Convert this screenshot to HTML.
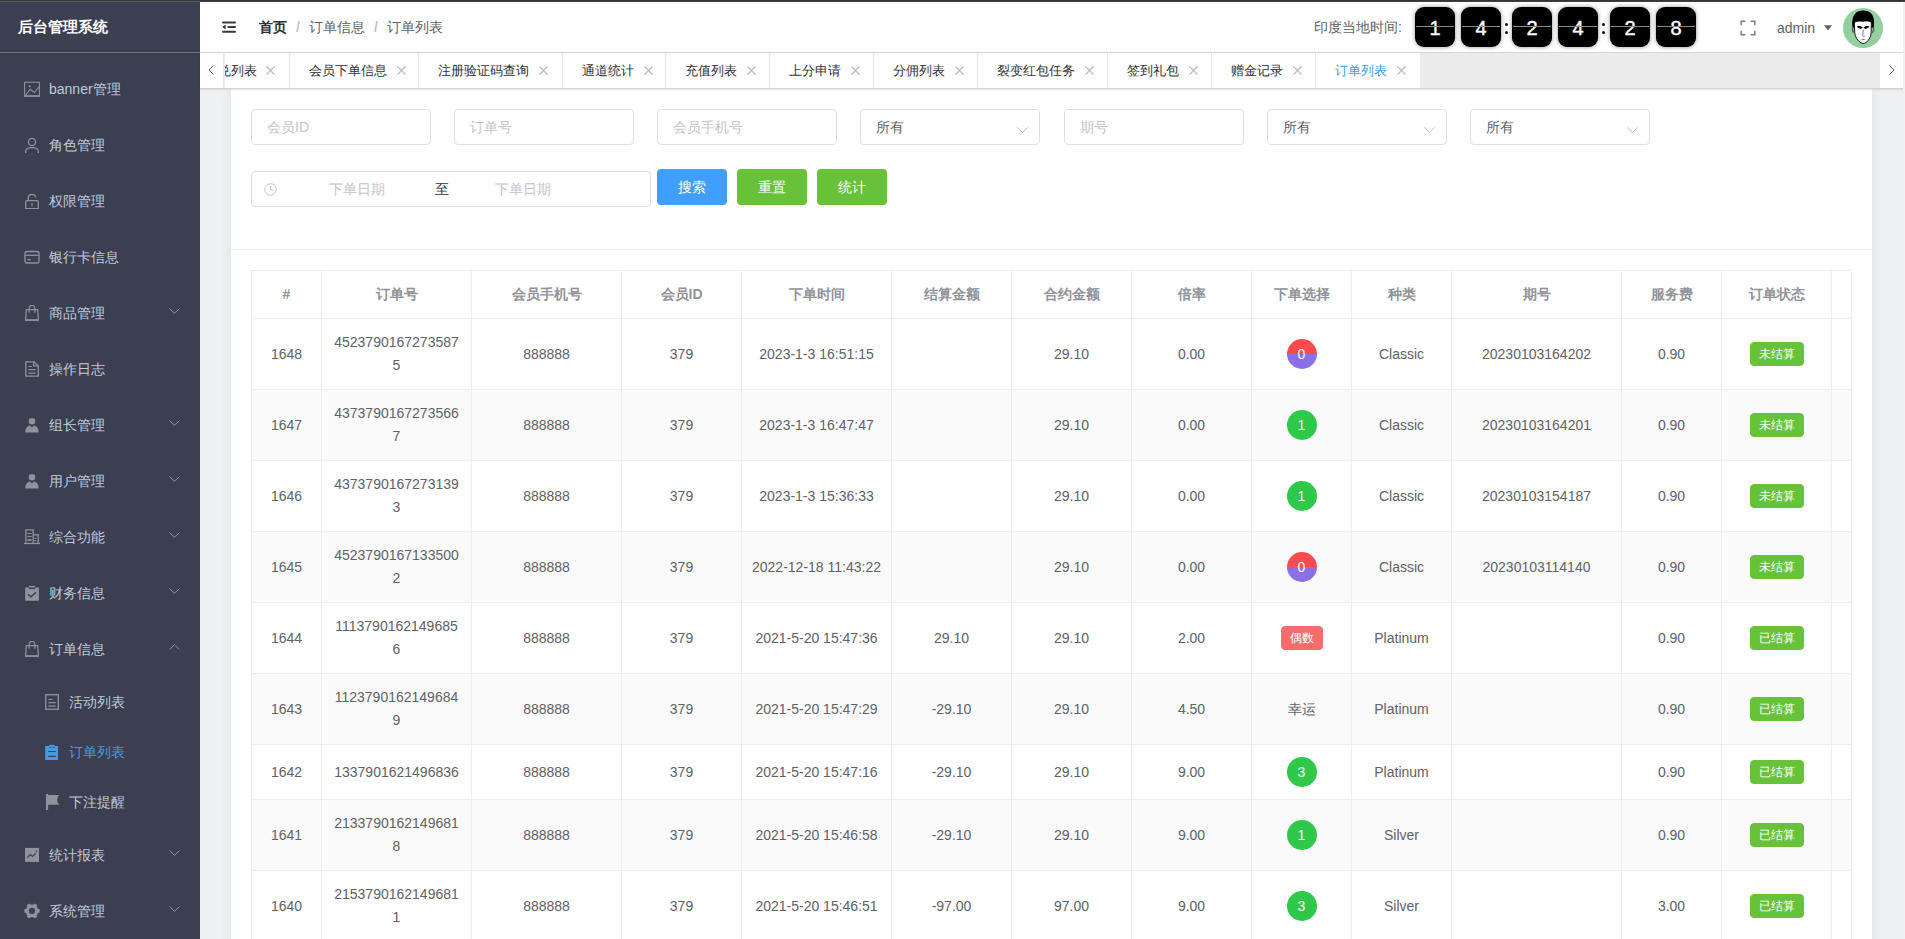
<!DOCTYPE html>
<html><head><meta charset="utf-8">
<style>
*{box-sizing:border-box;margin:0;padding:0}
html,body{width:1905px;height:939px;overflow:hidden;background:#eef1f2;font-family:"Liberation Sans",sans-serif;font-size:14px;color:#606266}
.abs{position:absolute}
#topbar{position:absolute;left:0;top:0;width:1905px;height:2px;background:#343539;z-index:6}
#side{position:absolute;left:0;top:2px;width:200px;height:937px;background:#3b3f51}
#logo{position:absolute;left:0;top:0;width:200px;height:51px;border-bottom:1px solid #6f717c}
#logo span{position:absolute;left:18px;top:15px;font-size:15px;font-weight:bold;color:#fff;line-height:20px;white-space:nowrap}
.mi{position:absolute;left:0;width:200px;height:56px;color:#bfcbd9;font-size:14px}
.mi .ic{position:absolute;left:24px;top:21px;width:16px;height:16px}
.mi .tx{position:absolute;left:49px;top:19px;line-height:20px;white-space:nowrap}
.mi .ch{position:absolute;left:169px;top:24px;width:11px;height:6px}
.si{position:absolute;left:0;width:200px;height:50px;color:#bfcbd9}
.si .ic{position:absolute;left:45px;top:18px;width:16px;height:16px}
.si .tx{position:absolute;left:69px;top:16px;line-height:20px;white-space:nowrap}
#hdr{position:absolute;left:200px;top:2px;width:1705px;height:51px;background:#fff;border-bottom:1px solid #d4d4d4;z-index:3}
#tabs{position:absolute;left:200px;top:53px;width:1703px;height:36px;background:#ebebeb;border-bottom:1px solid #d2d2d2;box-shadow:0 1px 2px 0 rgba(0,0,0,.10);z-index:2}
.tab{position:absolute;top:0;height:35px;background:#fff;border-right:1px solid #e6e6e6;font-size:13px;color:#303133;line-height:35px;white-space:nowrap}
.tab .t{position:absolute;left:19px;top:0}
.tab .x{position:absolute;top:13px;width:9px;height:9px}
#rstrip{position:absolute;left:1903px;top:2px;width:2px;height:937px;background:#f1f1f1;z-index:5}
#card{position:absolute;left:231px;top:89px;width:1641px;height:860px;background:#fff;box-shadow:0 0 12px rgba(0,0,0,.07)}
.inp{position:absolute;height:36px;border:1px solid #dcdfe6;border-radius:4px;background:#fff;font-size:14px;color:#c0c4cc;line-height:34px;white-space:nowrap}
.inp .p{position:absolute;left:15px;top:0}
.inp.sel .p{color:#606266;left:15px}
.inp .arr{position:absolute;right:11px;top:17px;width:11px;height:6px}
.btn{position:absolute;top:169px;height:36px;width:70px;border-radius:4px;color:#fff;font-size:14px;line-height:36px;text-align:center}
#tbl{position:absolute;left:251px;top:270px;border-collapse:collapse;table-layout:fixed;width:1601px}
#tbl td,#tbl th{border:1px solid #ebeef5;text-align:center;padding:0 10px;line-height:23px;word-break:break-all;font-size:14px;font-weight:normal;color:#606266}
#tbl th{color:#909399;font-weight:bold;height:48px}
#tbl tr.s td{background:#fafafa}
.cir{display:inline-block;width:30px;height:30px;border-radius:50%;color:#fff;line-height:30px;vertical-align:middle;font-size:14px}
.g{background:#2ec84a}
.rp{background:linear-gradient(#ff4b50 50%,#8a6fe8 50%)}
.tag{display:inline-block;height:24px;line-height:22px;padding:0 8px;border-radius:4px;font-size:12px;color:#fff;vertical-align:middle}
.tg{background:#67c23a;border:1px solid #67c23a}
.tr{background:#f56c6c;border:1px solid #f56c6c}


.bc .sep{color:#c0c4cc;margin:0 9px;font-weight:bold}
.dg{position:absolute;top:5px;width:40px;height:40px;background:#000;border-radius:9px;box-shadow:0 0 4px rgba(0,0,0,.45);color:#fff;font-size:20px;text-align:center;line-height:42px;-webkit-text-stroke:0.4px #fff}
.dg i{position:absolute;left:1px;right:1px;top:19px;height:1px;background:#8a8a8a}
.dot{position:absolute;width:3px;height:3px;border-radius:50%;background:#111}
</style></head><body>
<div id="side"><div id="logo"><span>后台管理系统</span></div></div>
<div class="mi" style="top:60px"><svg class="ic" viewBox="0 0 16 16"><rect x="0.6" y="1.25" width="14.8" height="14" stroke="#909399" fill="none" stroke-width="1.05"/><rect x="0.6" y="14.2" width="14.8" height="1.5" fill="#909399"/><path d="M1.6 14.2 L6.3 8.25 L10.3 11.5 L15 5.9" stroke="#909399" fill="none" stroke-width="1.05"/><circle cx="5.6" cy="5.2" r="1.05" fill="#909399"/></svg><span class="tx">banner管理</span></div>
<div class="mi" style="top:116px"><svg class="ic" viewBox="0 0 16 16"><circle cx="8" cy="5" r="3.6" stroke="#909399" fill="none" stroke-width="1.3"/><path d="M1.7 16 V14.5 C1.7 11.8 4 10.6 8 10.6 C12 10.6 14.3 11.8 14.3 14.5 V16" stroke="#909399" fill="none" stroke-width="1.3"/></svg><span class="tx">角色管理</span></div>
<div class="mi" style="top:172px"><svg class="ic" viewBox="0 0 16 16"><rect x="1.7" y="7.7" width="12.6" height="8" rx="1" stroke="#909399" fill="none" stroke-width="1.3"/><path d="M4.3 7.7 V5 C4.3 2.8 6 1.3 8 1.3 C10 1.3 11.5 2.6 11.7 4.3" stroke="#909399" fill="none" stroke-width="1.3"/><path d="M8 10.3 V13" stroke="#909399" fill="none" stroke-width="1.3" stroke-width="1.5"/></svg><span class="tx">权限管理</span></div>
<div class="mi" style="top:228px"><svg class="ic" viewBox="0 0 16 16"><rect x="1" y="2.5" width="14" height="11.5" rx="1.5" stroke="#909399" fill="none" stroke-width="1.3"/><path d="M1 6.3 H15" stroke="#909399" fill="none" stroke-width="1.3"/><path d="M3.2 10.7 H7" stroke="#909399" fill="none" stroke-width="1.3" stroke-width="1.5"/></svg><span class="tx">银行卡信息</span></div>
<div class="mi" style="top:284px"><svg class="ic" viewBox="0 0 16 16"><path d="M2.3 4.7 H13.7 L14.4 15.2 H1.6 Z" stroke="#909399" fill="none" stroke-width="1.2"/><rect x="1.4" y="14.3" width="13.2" height="1.5" fill="#909399"/><path d="M5.2 7.8 V3.3 C5.2 1.6 6.4 0.5 8 0.5 C9.6 0.5 10.8 1.6 10.8 3.3 V7.8" stroke="#909399" fill="none" stroke-width="1.2"/></svg><span class="tx">商品管理</span><svg class="ch" viewBox="0 0 11 6"><path d="M0.5 0.5 L5.5 5.3 L10.5 0.5" stroke="#909399" fill="none" stroke-width="1"/></svg></div>
<div class="mi" style="top:340px"><svg class="ic" viewBox="0 0 16 16"><path d="M1.8 0.8 H10 L14.3 5 V15.1 H1.8 Z" stroke="#909399" fill="none" stroke-width="1.3"/><path d="M9.6 0.8 V4.8 H14.3" stroke="#909399" fill="none" stroke-width="1.2"/><path d="M4.4 5.5 H7.8 M4.4 8.7 H11.6 M4.4 12.1 H11.6" stroke="#909399" fill="none" stroke-width="1.2"/></svg><span class="tx">操作日志</span></div>
<div class="mi" style="top:396px"><svg class="ic" viewBox="0 0 16 16"><circle cx="8" cy="4.2" r="3.3" fill="#909399"/><path d="M1.3 15.5 C1.3 11 3.5 9 6 8.5 L8 10.5 L10 8.5 C12.5 9 14.7 11 14.7 15.5 Z" fill="#909399"/></svg><span class="tx">组长管理</span><svg class="ch" viewBox="0 0 11 6"><path d="M0.5 0.5 L5.5 5.3 L10.5 0.5" stroke="#909399" fill="none" stroke-width="1"/></svg></div>
<div class="mi" style="top:452px"><svg class="ic" viewBox="0 0 16 16"><circle cx="8" cy="4.2" r="3.3" fill="#909399"/><path d="M1.3 15.5 C1.3 11 3.5 9 6 8.5 L8 10.5 L10 8.5 C12.5 9 14.7 11 14.7 15.5 Z" fill="#909399"/></svg><span class="tx">用户管理</span><svg class="ch" viewBox="0 0 11 6"><path d="M0.5 0.5 L5.5 5.3 L10.5 0.5" stroke="#909399" fill="none" stroke-width="1"/></svg></div>
<div class="mi" style="top:508px"><svg class="ic" viewBox="0 0 16 16"><path d="M1.9 14.5 V0.9 H9.2 V14.5" stroke="#909399" fill="none" stroke-width="1.3"/><path d="M9.2 5.8 H14.3 V14.5" stroke="#909399" fill="none" stroke-width="1.3"/><path d="M0 14.5 H16" stroke="#909399" fill="none" stroke-width="1.3"/><path d="M3.4 4.5 H7.6 M3.4 7.5 H7.6" stroke="#909399" fill="none" stroke-width="1.1"/><path d="M3.4 11 H7.6" stroke="#909399" fill="none" stroke-width="1.7"/><path d="M10.3 9.4 H12.4 M10.3 11.6 H12.4" stroke="#909399" fill="none" stroke-width="1"/></svg><span class="tx">综合功能</span><svg class="ch" viewBox="0 0 11 6"><path d="M0.5 0.5 L5.5 5.3 L10.5 0.5" stroke="#909399" fill="none" stroke-width="1"/></svg></div>
<div class="mi" style="top:564px"><svg class="ic" viewBox="0 0 16 16"><path d="M1.2 2.4 H5 V4 H11.1 V2.4 H14.9 V15.8 H1.2 Z" fill="#909399"/><rect x="5" y="0.9" width="6.1" height="1.6" fill="#909399"/><path d="M4 9.3 L7 11.8 L11.9 7.3" stroke="#3b3f51" fill="none" stroke-width="1.4"/></svg><span class="tx">财务信息</span><svg class="ch" viewBox="0 0 11 6"><path d="M0.5 0.5 L5.5 5.3 L10.5 0.5" stroke="#909399" fill="none" stroke-width="1"/></svg></div>
<div class="mi" style="top:620px"><svg class="ic" viewBox="0 0 16 16"><path d="M2.3 4.7 H13.7 L14.4 15.2 H1.6 Z" stroke="#909399" fill="none" stroke-width="1.2"/><rect x="1.4" y="14.3" width="13.2" height="1.5" fill="#909399"/><path d="M5.2 7.8 V3.3 C5.2 1.6 6.4 0.5 8 0.5 C9.6 0.5 10.8 1.6 10.8 3.3 V7.8" stroke="#909399" fill="none" stroke-width="1.2"/></svg><span class="tx">订单信息</span><svg class="ch" viewBox="0 0 11 6"><path d="M0.5 5.5 L5.5 0.7 L10.5 5.5" stroke="#909399" fill="none" stroke-width="1"/></svg></div>
<div class="mi" style="top:826px"><svg class="ic" viewBox="0 0 16 16"><rect x="1" y="0.9" width="14" height="14" fill="#909399"/><path d="M3.3 10.6 L6.2 7.5 L8.5 9.4 L11.6 6.3" stroke="#3b3f51" fill="none" stroke-width="1.2"/><circle cx="12.6" cy="4.4" r="0.8" fill="#3b3f51"/></svg><span class="tx">统计报表</span><svg class="ch" viewBox="0 0 11 6"><path d="M0.5 0.5 L5.5 5.3 L10.5 0.5" stroke="#909399" fill="none" stroke-width="1"/></svg></div>
<div class="mi" style="top:882px"><svg class="ic" viewBox="0 0 16 16"><path fill-rule="evenodd" d="M14.01 6.00 L15.73 6.28 L15.73 9.52 L14.01 9.80 L13.67 10.65 L13.21 11.44 L12.65 12.15 L13.27 13.79 L10.46 15.41 L9.36 14.05 L8.46 14.18 L7.54 14.18 L6.64 14.05 L5.54 15.41 L2.73 13.79 L3.35 12.15 L2.79 11.44 L2.33 10.65 L1.99 9.80 L0.27 9.52 L0.27 6.28 L1.99 6.00 L2.33 5.15 L2.79 4.36 L3.35 3.65 L2.73 2.01 L5.54 0.39 L6.64 1.75 L7.54 1.62 L8.46 1.62 L9.36 1.75 L10.46 0.39 L13.27 2.01 L12.65 3.65 L13.21 4.36 L13.67 5.15 Z M11.1 7.9 A3.1 3.1 0 1 0 4.9 7.9 A3.1 3.1 0 1 0 11.1 7.9 Z" fill="#909399"/></svg><span class="tx">系统管理</span><svg class="ch" viewBox="0 0 11 6"><path d="M0.5 0.5 L5.5 5.3 L10.5 0.5" stroke="#909399" fill="none" stroke-width="1"/></svg></div>
<div class="si" style="top:676px"><svg class="ic" viewBox="0 0 16 16"><rect x="0.75" y="0.75" width="12.6" height="14.5" stroke="#909399" fill="none" stroke-width="1.3"/><path d="M3.4 5.5 H7.5 M3.4 8.7 H10.7 M3.4 12.2 H10.7" stroke="#909399" fill="none" stroke-width="1.2"/></svg><span class="tx">活动列表</span></div>
<div class="si" style="top:726px"><svg class="ic" viewBox="0 0 16 16"><path d="M0.2 2.1 H4 V3.7 H9.8 V2.1 H13 V16 H0.2 Z" fill="#4a98df"/><rect x="4.2" y="0.9" width="5.4" height="2.5" fill="#4a98df"/><path d="M3.2 7.5 H10.7 M3.2 12.4 H10.7" stroke="#3b3f51" stroke-width="1.1"/></svg><span class="tx" style="color:#4a9ae2">订单列表</span></div>
<div class="si" style="top:776px"><svg class="ic" viewBox="0 0 16 16"><rect x="1" y="0" width="2.1" height="16" fill="#909399"/><path d="M3 0.9 H14.05 Q10.2 5.85 14.05 10.8 H3 Z" fill="#909399"/></svg><span class="tx">下注提醒</span></div>

<div id="hdr">
 <svg class="abs" style="left:22px;top:17px" width="14" height="14" viewBox="0 0 14 14"><g stroke="#38393d" stroke-width="2" stroke-linecap="round"><path d="M1 3.5 H13"/><path d="M6.3 8 H13"/><path d="M1 12.7 H13"/></g><path d="M0.2 8 L3.6 5.6 V10.4 Z" fill="#38393d"/></svg>
 <div class="abs bc" style="left:59px;top:15px;line-height:20px;white-space:nowrap"><b style="color:#303133">首页</b><span class="sep">/</span><span>订单信息</span><span class="sep">/</span><span>订单列表</span></div>
 <div class="abs" style="left:1114px;top:15px;line-height:20px;color:#606266;white-space:nowrap">印度当地时间:</div>
 <div class="dg" style="left:1215px"><span>1</span><i></i></div><div class="dg" style="left:1261px"><span>4</span><i></i></div><div class="dg" style="left:1312px"><span>2</span><i></i></div><div class="dg" style="left:1358px"><span>4</span><i></i></div><div class="dg" style="left:1410px"><span>2</span><i></i></div><div class="dg" style="left:1456px"><span>8</span><i></i></div><div class="dot" style="left:1305px;top:21px"></div><div class="dot" style="left:1305px;top:29px"></div><div class="dot" style="left:1402px;top:21px"></div><div class="dot" style="left:1402px;top:29px"></div>
 <svg class="abs" style="left:1540px;top:18px" width="16" height="16" viewBox="0 0 16 16"><path d="M1.2 5.3 V1.2 H5.3 M10.7 1.2 H14.8 V5.3 M14.8 10.7 V14.8 H10.7 M5.3 14.8 H1.2 V10.7" stroke="#7a7c80" stroke-width="1.5" fill="none"/></svg>
 <div class="abs" style="left:1577px;top:16px;line-height:20px;color:#606266">admin</div>
 <svg class="abs" style="left:1624px;top:23px" width="8" height="6" viewBox="0 0 8 6"><path d="M0 0.3 H8 L4 5.5 Z" fill="#606266"/></svg>
 <svg class="abs" style="left:1643px;top:6px" width="40" height="40" viewBox="0 0 40 40"><circle cx="20" cy="20" r="20" fill="#93cf9f"/>
<path d="M9.5 19.5 C8.5 12 10 6 15 3.6 C18 2.2 22 2.2 25.5 3.6 C30.5 6 32 12 30.8 19.5 L28.6 20 L28.3 14.2 C26 12.8 23 12.6 20 13.3 C16.5 12.8 13.7 13.2 11.7 14.5 L11.5 20 Z" fill="#000"/>
<path d="M11.4 14.5 C13.5 13 16.5 12.8 20 13.3 C23 12.6 26 12.8 28.3 14.2 L28.2 24 C28 29 25.5 33.5 21.5 35.3 L19 35.3 C15 33.5 12 29 11.7 24 Z" fill="#fff" stroke="#000" stroke-width="0.9"/>
<path d="M9.8 19.5 C9.2 21.5 10 24 11.8 25 M30.4 19.5 C31 21.5 30.2 24 28.4 25" stroke="#555" stroke-width="1.4" fill="none"/>
<path d="M13.8 18.6 C16 17.6 18.3 18.2 19.8 19.8 C18 21.4 15.8 21 13.8 18.6 Z M26.4 18.6 C24.2 17.6 21.9 18.2 20.6 19.8 C22.2 21.4 24.4 21 26.4 18.6 Z" fill="#000"/>
<path d="M20.3 21.5 L19.6 27.5 C20 28.5 21 28.6 22 27.8" stroke="#222" stroke-width="0.6" fill="none"/>
<path d="M18 31.5 C19.5 30.8 21 30.8 22.6 31.5 C21 32.6 19.5 32.6 18 31.5 Z" fill="#777"/></svg>
</div>
<div id="tabs"><div class="tab" style="left:0;width:24px"><svg class="abs" style="left:8px;top:12px" width="6" height="10" viewBox="0 0 6 10"><path d="M5.5 0.5 L1 5 L5.5 9.5" stroke="#606266" fill="none" stroke-width="1"/></svg></div><div class="tab" style="left:25px;width:65px;overflow:hidden"><span class="t" style="left:-7px">兑列表</span><svg class="x" style="left:41px" viewBox="0 0 9 9"><path d="M0.5 0.5 L8.5 8.5 M8.5 0.5 L0.5 8.5" stroke="#b8bcc4" stroke-width="1.15"/></svg></div><div class="tab" style="left:90px;width:129px"><span class="t">会员下单信息</span><svg class="x" style="left:107px" viewBox="0 0 9 9"><path d="M0.5 0.5 L8.5 8.5 M8.5 0.5 L0.5 8.5" stroke="#b8bcc4" stroke-width="1.15"/></svg></div><div class="tab" style="left:219px;width:144px"><span class="t">注册验证码查询</span><svg class="x" style="left:120px" viewBox="0 0 9 9"><path d="M0.5 0.5 L8.5 8.5 M8.5 0.5 L0.5 8.5" stroke="#b8bcc4" stroke-width="1.15"/></svg></div><div class="tab" style="left:363px;width:103px"><span class="t">通道统计</span><svg class="x" style="left:81px" viewBox="0 0 9 9"><path d="M0.5 0.5 L8.5 8.5 M8.5 0.5 L0.5 8.5" stroke="#b8bcc4" stroke-width="1.15"/></svg></div><div class="tab" style="left:466px;width:104px"><span class="t">充值列表</span><svg class="x" style="left:81px" viewBox="0 0 9 9"><path d="M0.5 0.5 L8.5 8.5 M8.5 0.5 L0.5 8.5" stroke="#b8bcc4" stroke-width="1.15"/></svg></div><div class="tab" style="left:570px;width:104px"><span class="t">上分申请</span><svg class="x" style="left:81px" viewBox="0 0 9 9"><path d="M0.5 0.5 L8.5 8.5 M8.5 0.5 L0.5 8.5" stroke="#b8bcc4" stroke-width="1.15"/></svg></div><div class="tab" style="left:674px;width:104px"><span class="t">分佣列表</span><svg class="x" style="left:81px" viewBox="0 0 9 9"><path d="M0.5 0.5 L8.5 8.5 M8.5 0.5 L0.5 8.5" stroke="#b8bcc4" stroke-width="1.15"/></svg></div><div class="tab" style="left:778px;width:130px"><span class="t">裂变红包任务</span><svg class="x" style="left:107px" viewBox="0 0 9 9"><path d="M0.5 0.5 L8.5 8.5 M8.5 0.5 L0.5 8.5" stroke="#b8bcc4" stroke-width="1.15"/></svg></div><div class="tab" style="left:908px;width:104px"><span class="t">签到礼包</span><svg class="x" style="left:81px" viewBox="0 0 9 9"><path d="M0.5 0.5 L8.5 8.5 M8.5 0.5 L0.5 8.5" stroke="#b8bcc4" stroke-width="1.15"/></svg></div><div class="tab" style="left:1012px;width:104px"><span class="t">赠金记录</span><svg class="x" style="left:81px" viewBox="0 0 9 9"><path d="M0.5 0.5 L8.5 8.5 M8.5 0.5 L0.5 8.5" stroke="#b8bcc4" stroke-width="1.15"/></svg></div><div class="tab" style="left:1116px;width:104px;border-right:0"><span class="t" style="color:#409eff;left:19px">订单列表</span><svg class="x" style="left:81px" viewBox="0 0 9 9"><path d="M0.5 0.5 L8.5 8.5 M8.5 0.5 L0.5 8.5" stroke="#b8bcc4" stroke-width="1.15"/></svg></div><div class="tab" style="left:1680px;width:23px;border-right:0;border-left:0"><svg class="abs" style="left:9px;top:12px" width="6" height="10" viewBox="0 0 6 10"><path d="M0.5 0.5 L5 5 L0.5 9.5" stroke="#606266" fill="none" stroke-width="1"/></svg></div></div>
<div id="card"></div>
<div class="inp" style="left:251px;top:109px;width:180px"><span class="p">会员ID</span></div><div class="inp" style="left:454px;top:109px;width:180px"><span class="p">订单号</span></div><div class="inp" style="left:657px;top:109px;width:180px"><span class="p">会员手机号</span></div><div class="inp sel" style="left:860px;top:109px;width:180px"><span class="p">所有</span><svg class="arr" viewBox="0 0 11 6"><path d="M0.3 0.3 L5.5 5.5 L10.7 0.3" stroke="#c0c4cc" fill="none" stroke-width="1"/></svg></div><div class="inp" style="left:1064px;top:109px;width:180px"><span class="p">期号</span></div><div class="inp sel" style="left:1267px;top:109px;width:180px"><span class="p">所有</span><svg class="arr" viewBox="0 0 11 6"><path d="M0.3 0.3 L5.5 5.5 L10.7 0.3" stroke="#c0c4cc" fill="none" stroke-width="1"/></svg></div><div class="inp sel" style="left:1470px;top:109px;width:180px"><span class="p">所有</span><svg class="arr" viewBox="0 0 11 6"><path d="M0.3 0.3 L5.5 5.5 L10.7 0.3" stroke="#c0c4cc" fill="none" stroke-width="1"/></svg></div><div class="inp" style="left:251px;top:171px;width:400px"><svg class="abs" style="left:12px;top:11px" width="13" height="13" viewBox="0 0 13 13"><circle cx="6.5" cy="6.5" r="5.8" stroke="#c0c4cc" fill="none" stroke-width="1"/><path d="M6.5 3 V7 H9.5" stroke="#c0c4cc" fill="none" stroke-width="1"/></svg><span class="p" style="left:77px">下单日期</span><span class="p" style="left:183px;color:#303133">至</span><span class="p" style="left:243px">下单日期</span></div>
<div class="btn" style="left:657px;background:#409eff">搜索</div><div class="btn" style="left:737px;background:#67c23a">重置</div><div class="btn" style="left:817px;background:#67c23a">统计</div>
<div class="abs" style="left:231px;top:249px;width:1641px;height:1px;background:#ebeef5"></div>
<table id="tbl"><colgroup><col style="width:70px"><col style="width:150px"><col style="width:150px"><col style="width:120px"><col style="width:150px"><col style="width:120px"><col style="width:120px"><col style="width:120px"><col style="width:100px"><col style="width:100px"><col style="width:170px"><col style="width:100px"><col style="width:110px"><col style="width:20px"></colgroup><tr><th>#</th><th>订单号</th><th>会员手机号</th><th>会员ID</th><th>下单时间</th><th>结算金额</th><th>合约金额</th><th>倍率</th><th>下单选择</th><th>种类</th><th>期号</th><th>服务费</th><th>订单状态</th><th></th></tr><tr style="height:71px"><td>1648</td><td>45237901672735875</td><td>888888</td><td>379</td><td>2023-1-3 16:51:15</td><td></td><td>29.10</td><td>0.00</td><td><span class="cir rp">0</span></td><td>Classic</td><td>20230103164202</td><td>0.90</td><td><span class="tag tg">未结算</span></td><td></td></tr><tr class="s" style="height:71px"><td>1647</td><td>43737901672735667</td><td>888888</td><td>379</td><td>2023-1-3 16:47:47</td><td></td><td>29.10</td><td>0.00</td><td><span class="cir g">1</span></td><td>Classic</td><td>20230103164201</td><td>0.90</td><td><span class="tag tg">未结算</span></td><td></td></tr><tr style="height:71px"><td>1646</td><td>43737901672731393</td><td>888888</td><td>379</td><td>2023-1-3 15:36:33</td><td></td><td>29.10</td><td>0.00</td><td><span class="cir g">1</span></td><td>Classic</td><td>20230103154187</td><td>0.90</td><td><span class="tag tg">未结算</span></td><td></td></tr><tr class="s" style="height:71px"><td>1645</td><td>45237901671335002</td><td>888888</td><td>379</td><td>2022-12-18 11:43:22</td><td></td><td>29.10</td><td>0.00</td><td><span class="cir rp">0</span></td><td>Classic</td><td>20230103114140</td><td>0.90</td><td><span class="tag tg">未结算</span></td><td></td></tr><tr style="height:71px"><td>1644</td><td>11137901621496856</td><td>888888</td><td>379</td><td>2021-5-20 15:47:36</td><td>29.10</td><td>29.10</td><td>2.00</td><td><span class="tag tr">偶数</span></td><td>Platinum</td><td></td><td>0.90</td><td><span class="tag tg">已结算</span></td><td></td></tr><tr class="s" style="height:71px"><td>1643</td><td>11237901621496849</td><td>888888</td><td>379</td><td>2021-5-20 15:47:29</td><td>-29.10</td><td>29.10</td><td>4.50</td><td>幸运</td><td>Platinum</td><td></td><td>0.90</td><td><span class="tag tg">已结算</span></td><td></td></tr><tr style="height:55px"><td>1642</td><td>1337901621496836</td><td>888888</td><td>379</td><td>2021-5-20 15:47:16</td><td>-29.10</td><td>29.10</td><td>9.00</td><td><span class="cir g">3</span></td><td>Platinum</td><td></td><td>0.90</td><td><span class="tag tg">已结算</span></td><td></td></tr><tr class="s" style="height:71px"><td>1641</td><td>21337901621496818</td><td>888888</td><td>379</td><td>2021-5-20 15:46:58</td><td>-29.10</td><td>29.10</td><td>9.00</td><td><span class="cir g">1</span></td><td>Silver</td><td></td><td>0.90</td><td><span class="tag tg">已结算</span></td><td></td></tr><tr style="height:71px"><td>1640</td><td>21537901621496811</td><td>888888</td><td>379</td><td>2021-5-20 15:46:51</td><td>-97.00</td><td>97.00</td><td>9.00</td><td><span class="cir g">3</span></td><td>Silver</td><td></td><td>3.00</td><td><span class="tag tg">已结算</span></td><td></td></tr></table>
<div id="rstrip"></div>
<div id="topbar"></div><div class="abs" style="left:0;top:1px;width:200px;height:1px;background:#5a5a5e;z-index:6"></div><div class="abs" style="left:200px;top:1px;width:1705px;height:1px;background:#3e3f44;z-index:6"></div>
</body></html>
